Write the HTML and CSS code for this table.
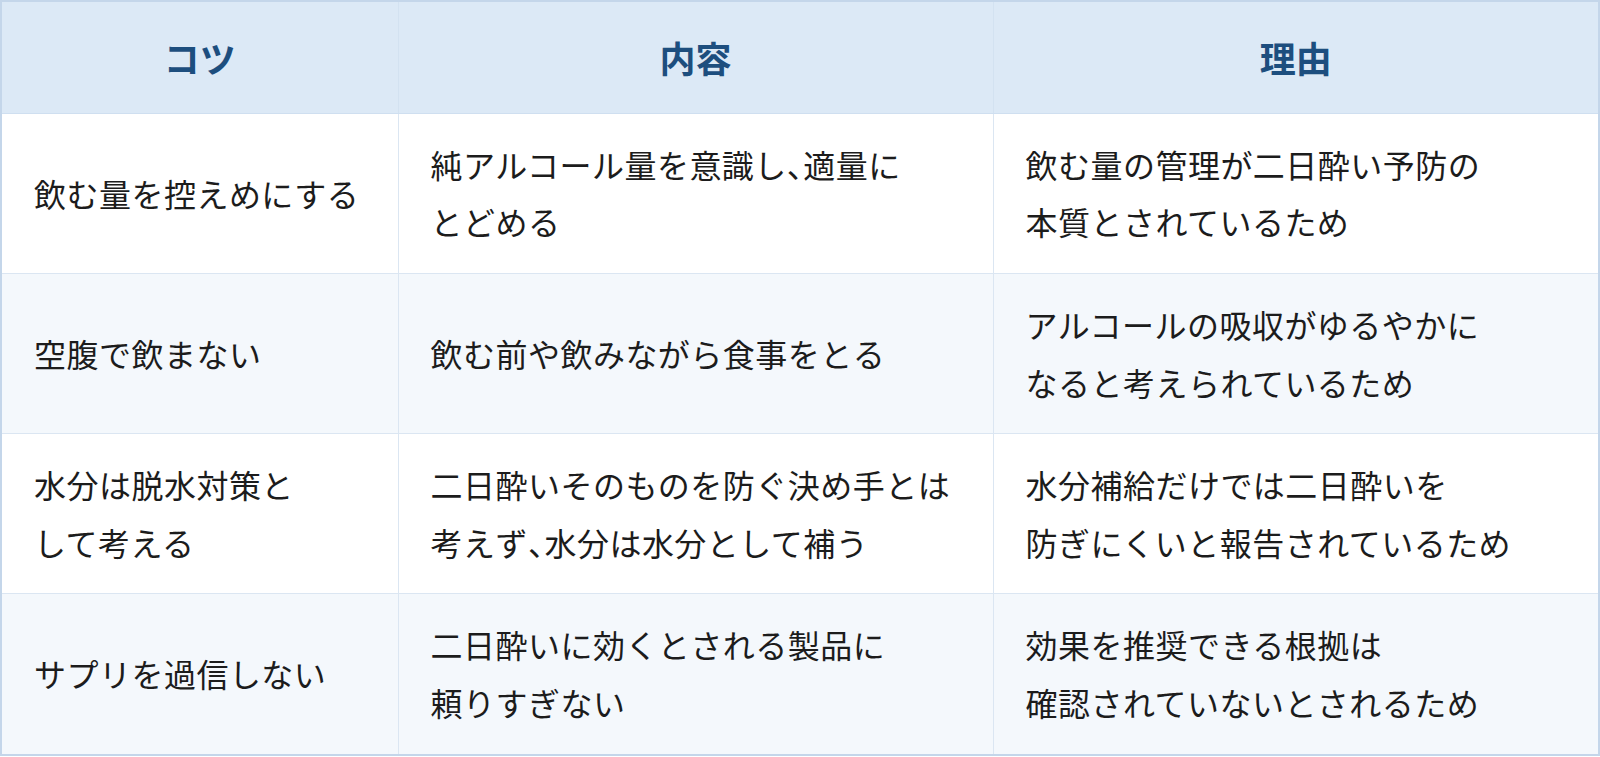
FILE: index.html
```html
<!DOCTYPE html>
<html lang="ja">
<head>
<meta charset="utf-8">
<title>二日酔い対策のコツ</title>
<link rel="stylesheet" href="styles.css">
</head>
<body>
<table class="tips">
  <colgroup>
    <col class="c1">
    <col class="c2">
    <col class="c3">
  </colgroup>
  <thead>
    <tr><th>コツ</th><th>内容</th><th>理由</th></tr>
  </thead>
  <tbody>
    <tr>
      <td>飲む量を控えめにする</td>
      <td>純アルコール量を意識し<span class="pn">、</span>適量に<br>とどめる</td>
      <td>飲む量の管理が二日酔い予防の<br>本質とされているため</td>
    </tr>
    <tr>
      <td>空腹で飲まない</td>
      <td>飲む前や飲みながら食事をとる</td>
      <td>アルコールの吸収がゆるやかに<br>なると考えられているため</td>
    </tr>
    <tr>
      <td>水分は脱水対策と<br>して考える</td>
      <td>二日酔いそのものを防ぐ決め手とは<br>考えず<span class="pn">、</span>水分は水分として補う</td>
      <td>水分補給だけでは二日酔いを<br>防ぎにくいと報告されているため</td>
    </tr>
    <tr>
      <td>サプリを過信しない</td>
      <td>二日酔いに効くとされる製品に<br>頼りすぎない</td>
      <td>効果を推奨できる根拠は<br>確認されていないとされるため</td>
    </tr>
  </tbody>
</table>
</body>
</html>
```
FILE: styles.css
```css
html, body {
  margin: 0;
  padding: 0;
  background: #ffffff;
}
body {
  font-family: "Noto Sans CJK JP", "Noto Sans", sans-serif;
  color: #1c1c1c;
}
.tips {
  width: 1600px;
  border-collapse: collapse;
  table-layout: fixed;
  border: 2px solid #c4d6ea;
}
.tips .c1 { width: 397px; }
.tips .c2 { width: 595px; }
.tips .c3 { width: auto; }
.tips th {
  background: #dce9f6;
  color: #1d4e7e;
  font-size: 36px;
  font-weight: 700;
  line-height: 1.8;
  padding: 23px 32px;
  text-align: center;
  border: 1px solid #d3e2f1;
  border-top: 2px solid #c4d6ea;
  border-bottom: 1px solid #cfdff0;
}
.tips td {
  font-size: 32px;
  line-height: 1.8;
  letter-spacing: 0.015em;
  padding: 22px 32px;
  vertical-align: middle;
  border: 1px solid #dbe6f2;
  text-align: left;
}
.tips .pn {
  font-feature-settings: "halt";
}
.tips tbody tr:nth-child(even) td {
  background: #f4f8fc;
}
.tips tbody tr:last-child td {
  border-bottom: 2px solid #c4d6ea;
}
.tips tr > :first-child { border-left: 2px solid #c4d6ea; }
.tips tr > :last-child { border-right: 2px solid #c4d6ea; }
```
